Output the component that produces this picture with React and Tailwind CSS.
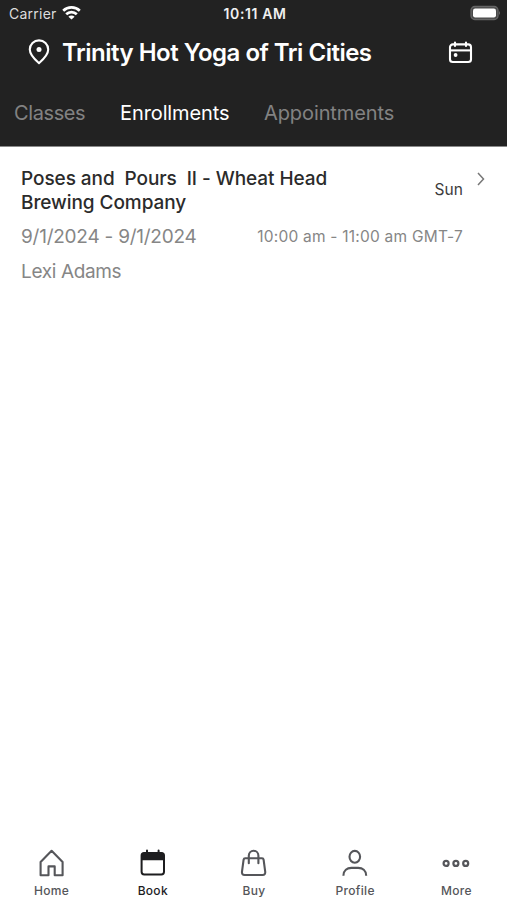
import React, { useState } from "react";

const HomeIcon = () => (
  <svg width="28" height="28" viewBox="0 0 28 28" fill="none" stroke="currentColor" strokeWidth="2.1" strokeLinejoin="round">
    <path d="M13.6 1.8 L24.6 13 V26.2 H16.7 V17.4 H10.5 V26.2 H2.6 V13 Z" />
  </svg>
);

const BookIcon = () => (
  <svg width="28" height="28" viewBox="0 0 28 28" fill="none" stroke="currentColor" strokeWidth="2">
    <rect x="2.6" y="4" width="22.4" height="21.4" rx="2.6" />
    <path d="M2.6 11.2 V6 Q2.6 3.4 5 3.4 H22.6 Q25 3.4 25 6 V11.2 Z" fill="currentColor" stroke="none" />
    <path d="M8 1.6 V5 M19.6 1.6 V5" strokeLinecap="round" />
  </svg>
);

const BuyIcon = () => (
  <svg width="28" height="28" viewBox="0 0 28 28" fill="none" stroke="currentColor" strokeWidth="2.1" strokeLinecap="round">
    <path d="M5.2 9.2 H22 Q23.4 9.2 23.6 10.6 L25.2 22.6 Q25.6 26 22.6 26 H4.6 Q1.6 26 2 22.6 L3.6 10.6 Q3.8 9.2 5.2 9.2 Z" />
    <path d="M8.8 14.2 V6.8 A4.8 5 0 0 1 18.4 6.8 V14.2" />
  </svg>
);

const ProfileIcon = () => (
  <svg width="28" height="28" viewBox="0 0 28 28" fill="none" stroke="currentColor" strokeWidth="2.1">
    <ellipse cx="13.8" cy="7.8" rx="5.3" ry="5.9" />
    <path d="M2.4 26.8 C2.4 21.4 6.2 18.9 10.4 18.9 H17.2 C21.4 18.9 25.2 21.4 25.2 26.8" />
  </svg>
);

const MoreIcon = () => (
  <svg width="28" height="28" viewBox="0 0 28 28" fill="none" stroke="currentColor" strokeWidth="2.2">
    <circle cx="4.1" cy="14.4" r="2.5" />
    <circle cx="13.9" cy="14.4" r="2.5" />
    <circle cx="23.7" cy="14.4" r="2.5" />
  </svg>
);

const tabs = [
  { name: "Classes", style: "w-[71px] tracking-[-0.4px]" },
  { name: "Enrollments", style: "w-[109px] tracking-[-0.1px]" },
  { name: "Appointments", style: "w-[130px] tracking-[-0.1px]" },
];

const navItems = [
  { name: "Home", icon: HomeIcon },
  { name: "Book", icon: BookIcon },
  { name: "Buy", icon: BuyIcon },
  { name: "Profile", icon: ProfileIcon },
  { name: "More", icon: MoreIcon },
];

const StatusBar = () => (
  <div className="grid grid-cols-3 items-center h-[27px] pl-[9px] pr-[6px]">
    <div className="flex items-center gap-[5px] text-[14px] tracking-[0.25px] text-[#dddddd]">
      Carrier
      <svg width="19" height="14" viewBox="0 0 19 14" fill="none" stroke="white" strokeWidth="2.7" className="-mt-[1px]">
        <path d="M1.2 4.8 A12 12 0 0 1 17.8 4.8" />
        <path d="M4.2 8.3 A7.6 7.6 0 0 1 14.8 8.3" />
        <path d="M9.5 13.6 L6.4 10.7 A4.4 4.4 0 0 1 12.6 10.7 Z" fill="white" stroke="none" />
      </svg>
    </div>
    <div className="text-center text-[14px] font-semibold tracking-[0.6px] text-[#f0f0f0]">10:11 AM</div>
    <svg width="31" height="16" viewBox="0 0 31 16" className="justify-self-end -mt-[1px]">
      <rect x="1" y="1.5" width="27" height="13" rx="3.8" fill="#4a4a4a" stroke="#666666" strokeWidth="1.3" />
      <rect x="3" y="3.5" width="23" height="9" rx="2.2" fill="white" />
      <path d="M29 5.8 Q30.8 8 29 10.2 Z" fill="#777777" />
    </svg>
  </div>
);

const App = () => {
  const [activeTab, setActiveTab] = useState("Enrollments");
  const [activePage, setActivePage] = useState("Book");

  return (
    <div className="flex flex-col h-screen bg-white font-['Inter','Liberation_Sans',sans-serif] whitespace-nowrap">
      <header className="h-[147px] shrink-0 bg-[#222222] border-b border-[#8a8a8a] text-white">
        <StatusBar />
        <div className="flex items-center h-[50px] pl-7 pr-[34px]">
          <svg width="22" height="26" viewBox="0 0 22 26" fill="none" stroke="white" strokeWidth="2.1" strokeLinejoin="round">
            <path d="M11 24.2 C8.5 22 1.8 16.5 1.8 10.6 A9.2 9.2 0 0 1 20.2 10.6 C20.2 16.5 13.5 22 11 24.2 Z" />
            <circle cx="11" cy="10.6" r="2.5" fill="white" stroke="none" />
          </svg>
          <h1 className="ml-3 pt-[2px] text-[24px] font-semibold tracking-[-0.5px]">
            Trinity Hot Yoga of Tri Cities
          </h1>
          <button className="ml-auto">
            <svg width="25" height="24" viewBox="0 0 25 24" fill="none" stroke="white" strokeWidth="2.1" className="block">
              <rect x="2" y="4.4" width="21" height="17.6" rx="2.8" />
              <path d="M2 10.4 H23" />
              <path d="M7 2.6 V6 M18 2.6 V6" strokeLinecap="round" />
              <circle cx="7.6" cy="15" r="1.9" fill="white" stroke="none" />
            </svg>
          </button>
        </div>
        <nav className="flex items-center h-[72px] pl-[14px] gap-[35px] text-[20px]">
          {tabs.map((tab) => (
            <button
              key={tab.name}
              onClick={() => setActiveTab(tab.name)}
              className={`text-left ${tab.style} ${activeTab === tab.name ? "text-white" : "text-[#828282]"}`}
            >
              {tab.name}
            </button>
          ))}
        </nav>
      </header>

      <main className="flex-1 pl-[21px] pr-[22px] pt-5">
        <div className="flex">
          <div className="flex-1">
            <div className="flex justify-between">
              <h2 className="text-[19px] leading-6 font-medium tracking-[-0.07px] text-[#2b2b2b] whitespace-pre">
                {"Poses and  Pours  II - Wheat Head\nBrewing Company"}
              </h2>
              <span className="pt-[11px] text-[15.5px] leading-6 tracking-[0.1px] text-[#3c3c3c]">Sun</span>
            </div>
            <div className="flex justify-between items-center mt-[10px] h-6 text-[#868686]">
              <span className="text-[19px] tracking-[-0.24px]">9/1/2024 - 9/1/2024</span>
              <span className="text-[15.5px] tracking-[0.22px]">10:00 am - 11:00 am GMT-7</span>
            </div>
            <p className="mt-[11px] text-[19px] leading-6 tracking-[-0.35px] text-[#868686]">Lexi Adams</p>
          </div>
          <svg width="8" height="14" viewBox="0 0 8 14" fill="none" stroke="#777777" strokeWidth="1.5" className="ml-[14px] mt-[5px]">
            <path d="M1 1 L6.5 7 L1 13" />
          </svg>
        </div>
      </main>

      <footer className="grid grid-cols-5 h-[51px] shrink-0 pl-px">
        {navItems.map(({ name, icon: Icon }) => (
          <button
            key={name}
            onClick={() => setActivePage(name)}
            className={`flex flex-col items-center ${activePage === name ? "text-[#1d1d1f]" : "text-[#55565a]"}`}
          >
            <Icon />
            <span className="mt-[6px] text-[12px] leading-4 font-medium tracking-[0.3px]">{name}</span>
          </button>
        ))}
      </footer>
    </div>
  );
};

export default App;
